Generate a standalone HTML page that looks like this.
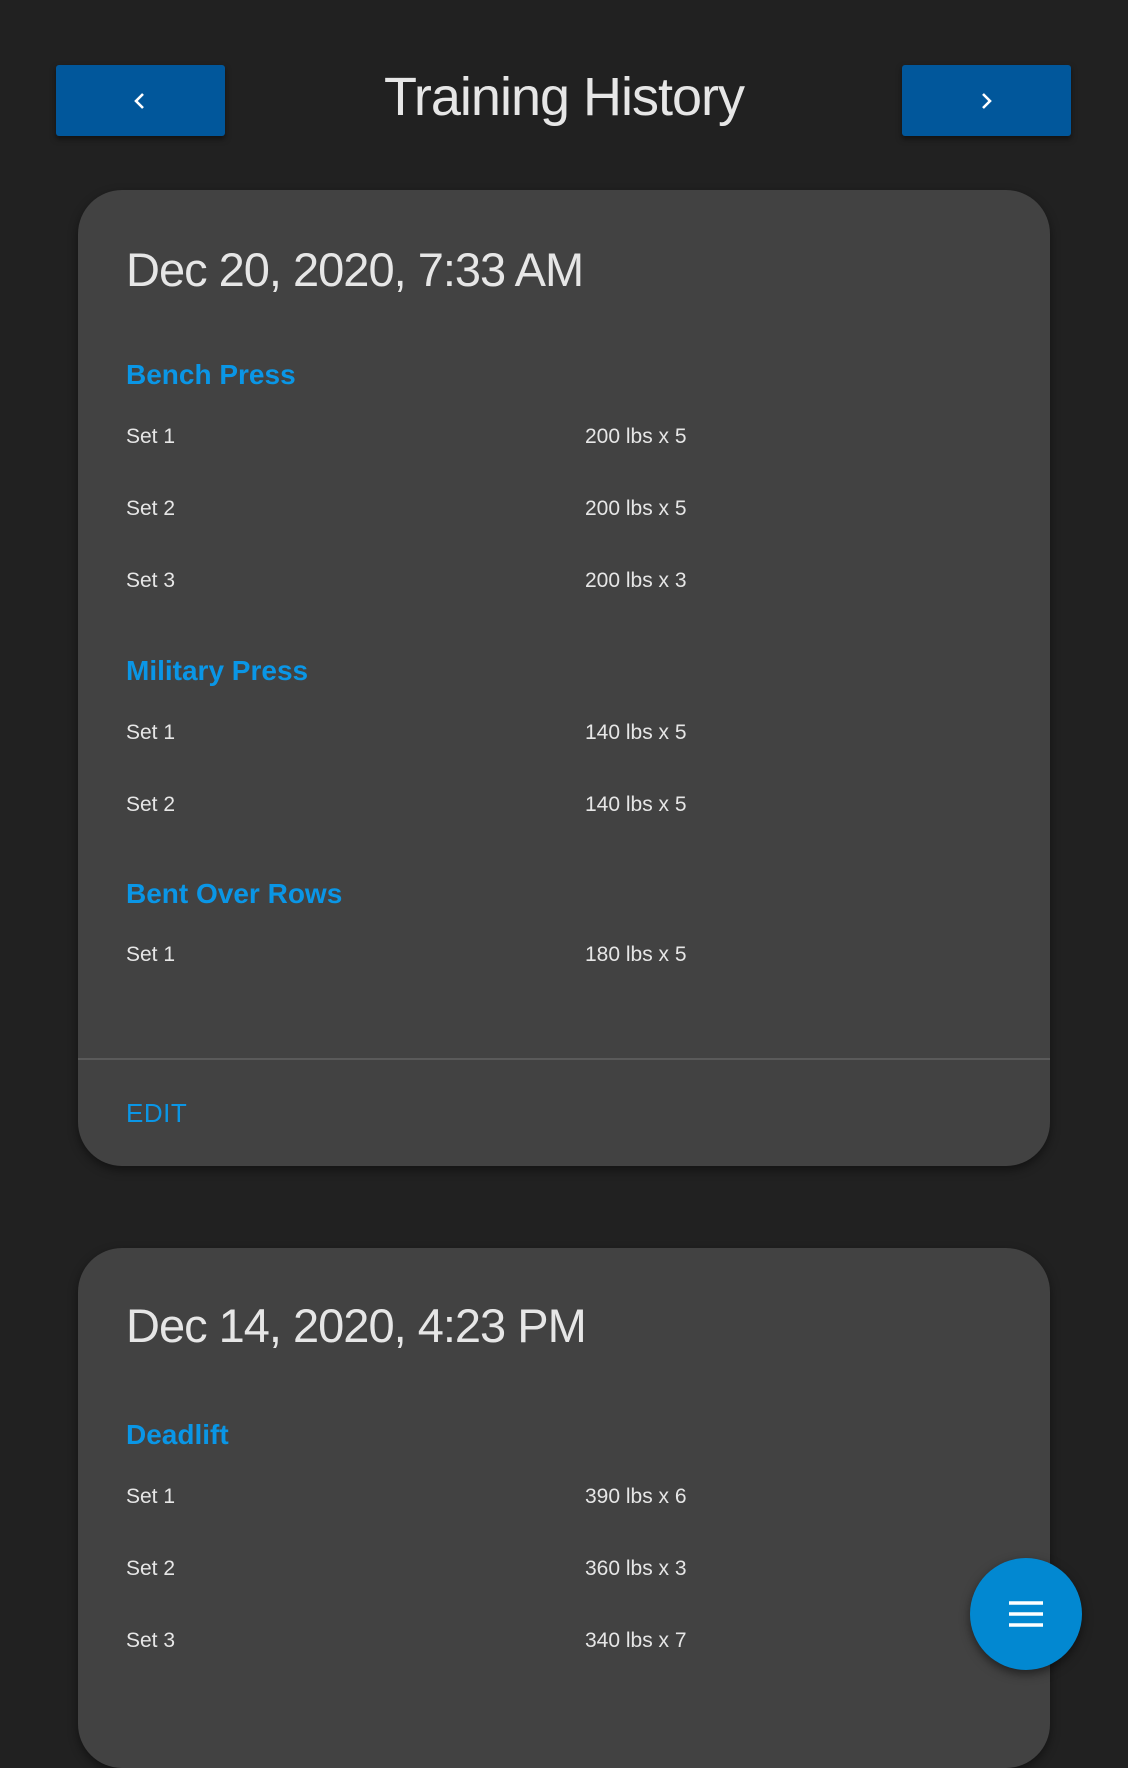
<!DOCTYPE html>
<html><head><meta charset="utf-8"><style>
*{margin:0;padding:0;box-sizing:border-box}
html,body{width:1128px;height:1716px;overflow:hidden;background:#212121;font-family:"Liberation Sans",sans-serif;color:#e6e6e6}
.a{position:absolute;line-height:1;white-space:nowrap}
.btn{position:absolute;top:65px;width:169px;height:71px;background:#01579b;border-radius:3px;box-shadow:0 3px 6px rgba(0,0,0,.5)}
.btn svg{position:absolute;left:74px;top:26px}
.card{position:absolute;left:78px;width:972px;background:#424242;border-radius:44px;box-shadow:0 4px 10px rgba(0,0,0,.45)}
.date{font-size:47px;left:126px;letter-spacing:-1px}
.ex{font-size:28px;color:#0a96e6;left:126px;font-weight:bold}
.s{font-size:21px;left:126px}
.v{font-size:21px;left:585px}
</style></head><body>
<div class="btn" style="left:56px"><svg width="20" height="20" viewBox="0 0 20 20"><path d="M13 3 L6 10 L13 17" stroke="#fff" stroke-width="2.6" fill="none"/></svg></div>
<div class="btn" style="left:902px"><svg width="20" height="20" viewBox="0 0 20 20"><path d="M7 3 L14 10 L7 17" stroke="#fff" stroke-width="2.6" fill="none"/></svg></div>
<div class="a" style="font-size:54px;left:0;width:1128px;text-align:center;top:70px;letter-spacing:-1px">Training History</div>

<div class="card" style="top:190px;height:976px"></div>
<div class="a" style="left:78px;top:1058px;width:972px;height:2px;background:#5a5a5a"></div>
<div class="a date" style="top:246px">Dec 20, 2020, 7:33 AM</div>
<div class="a ex" style="top:361px">Bench Press</div>
<div class="a s" style="top:426px">Set 1</div><div class="a v" style="top:426px">200 lbs x 5</div>
<div class="a s" style="top:498px">Set 2</div><div class="a v" style="top:498px">200 lbs x 5</div>
<div class="a s" style="top:570px">Set 3</div><div class="a v" style="top:570px">200 lbs x 3</div>
<div class="a ex" style="top:657px">Military Press</div>
<div class="a s" style="top:722px">Set 1</div><div class="a v" style="top:722px">140 lbs x 5</div>
<div class="a s" style="top:794px">Set 2</div><div class="a v" style="top:794px">140 lbs x 5</div>
<div class="a ex" style="top:880px">Bent Over Rows</div>
<div class="a s" style="top:944px">Set 1</div><div class="a v" style="top:944px">180 lbs x 5</div>
<div class="a" style="font-size:26px;color:#0a96e6;left:126px;top:1100px;letter-spacing:.5px">EDIT</div>

<div class="card" style="top:1248px;height:520px"></div>
<div class="a date" style="top:1302px">Dec 14, 2020, 4:23 PM</div>
<div class="a ex" style="top:1421px">Deadlift</div>
<div class="a s" style="top:1486px">Set 1</div><div class="a v" style="top:1486px">390 lbs x 6</div>
<div class="a s" style="top:1558px">Set 2</div><div class="a v" style="top:1558px">360 lbs x 3</div>
<div class="a s" style="top:1630px">Set 3</div><div class="a v" style="top:1630px">340 lbs x 7</div>

<div class="a" style="left:970px;top:1558px;width:112px;height:112px;border-radius:50%;background:#0288d1;box-shadow:0 4px 10px rgba(0,0,0,.5)">
<svg style="position:absolute;left:38px;top:41px" width="36" height="30" viewBox="0 0 36 30"><path d="M1 4H35M1 15H35M1 26H35" stroke="#fff" stroke-width="3.5"/></svg></div>
</body></html>
